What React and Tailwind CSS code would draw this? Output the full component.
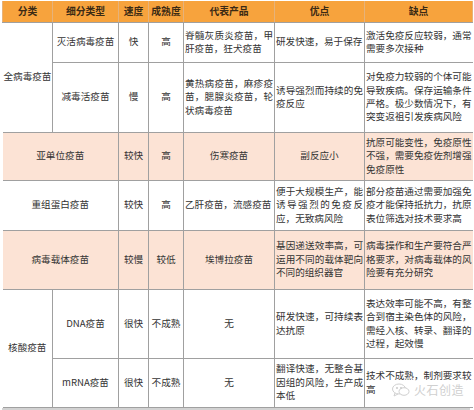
const cell = "border border-[#a0a0a0] align-middle px-[1px] text-[9.6px] leading-[13.4px] text-[#333] whitespace-nowrap";

const Lines = ({ lines }) => (
    <div className="flex flex-col">
        {lines.map((l, i) => (
            <div key={i} className={i < lines.length - 1 ? "whitespace-nowrap text-justify [text-align-last:justify]" : "whitespace-nowrap text-left"}>
                {l}
            </div>
        ))}
    </div>
);

const rows = [
    {
        h: "h-[40px]", pink: false, group: "全病毒疫苗", span: 2, sub: "灭活病毒疫苗", speed: "快", mature: "高",
        product: ["脊髓灰质炎疫苗，甲", "肝疫苗，狂犬疫苗"],
        pro: ["研发快速，易于保存"],
        con: ["激活免疫反应较弱，通常", "需要多次接种"],
    },
    {
        h: "h-[70px]", pink: false, sub: "减毒活疫苗", speed: "慢", mature: "高",
        product: ["黄热病疫苗，麻疹疫", "苗，腮腺炎疫苗，轮", "状病毒疫苗"],
        pro: ["诱导强烈而持续的免", "疫反应"],
        con: ["对免疫力较弱的个体可能", "导致疾病。保存运输条件", "严格。极少数情况下，有", "突变返祖引发疾病风险"],
    },
    {
        h: "h-[48px]", pink: true, wide: "亚单位疫苗", speed: "较快", mature: "高",
        product: "伤寒疫苗", pro: "副反应小",
        con: ["抗原可能变性，免疫原性", "不强，需要免疫佐剂增强", "免疫原性"],
    },
    {
        h: "h-[50px]", pink: false, wide: "重组蛋白疫苗", speed: "较快", mature: "高",
        product: ["乙肝疫苗，流感疫苗"],
        pro: ["便于大规模生产，能", "诱导强烈的免疫反", "应，无致病风险"],
        con: ["部分疫苗通过需要加强免", "疫才能保持抵抗力，抗原", "表位筛选对技术要求高"],
    },
    {
        h: "h-[59px]", pink: true, wide: "病毒载体疫苗", speed: "较慢", mature: "较低",
        product: "埃博拉疫苗",
        pro: ["基因递送效率高，可", "运用不同的载体靶向", "不同的组织器官"],
        con: ["病毒操作和生产要符合严", "格要求，对病毒载体的风", "险要有充分研究"],
    },
    {
        h: "h-[69px]", pink: false, group: "核酸疫苗", span: 2, sub: "DNA疫苗", speed: "很快", mature: "不成熟",
        product: "无",
        pro: ["研发快速，可持续表", "达抗原"],
        con: ["表达效率可能不高，有整", "合到宿主染色体的风险，", "需经入核、转录、翻译的", "过程，起效慢"],
    },
    {
        h: "h-[49px]", pink: false, sub: "mRNA疫苗", speed: "很快", mature: "不成熟",
        product: "无",
        pro: ["翻译快速，无整合基", "因组的风险，生产成", "本低"],
        con: ["技术不成熟，制剂要求较", "高"],
    },
];

const Content = ({ v }) => Array.isArray(v) ? <Lines lines={v} /> : <div className="text-center">{v}</div>;

export default function App() {
    return (
        <div className="relative w-[474px] h-[410px] bg-white overflow-hidden" style={{ fontFamily: '"Noto Sans CJK SC", "Noto Sans", sans-serif' }}>
            <table className="ml-[2px] mt-[1px] w-[470px] table-fixed border-collapse">
                <colgroup>
                    <col className="w-[50px]" />
                    <col className="w-[66px]" />
                    <col className="w-[30px]" />
                    <col className="w-[35px]" />
                    <col className="w-[91px]" />
                    <col className="w-[90px]" />
                    <col className="w-[108px]" />
                </colgroup>
                <thead>
                    <tr className="h-[21px] bg-[#f7a33d]">
                        {["分类", "细分类型", "速度", "成熟度", "代表产品", "优点", "缺点"].map((t, i) => (
                            <th key={i} className="border-x border-[#e6b27a] border-t-0 border-b border-b-[#a0a0a0] text-center text-[9.8px] font-bold text-[#3b2a14] whitespace-nowrap">{t}</th>
                        ))}
                    </tr>
                </thead>
                <tbody>
                    {rows.map((r, i) => (
                        <tr key={i} className={`${r.h} ${r.pink ? "bg-[#fce3d5]" : "bg-white"}`}>
                            {r.group && <td rowSpan={r.span} className={`${cell} text-center border-l-0`}>{r.group}</td>}
                            {r.wide ? (
                                <td colSpan={2} className={`${cell} text-center border-l-0`}>{r.wide}</td>
                            ) : (
                                <td className={`${cell} text-center`}>{r.sub}</td>
                            )}
                            <td className={`${cell} text-center`}>{r.speed}</td>
                            <td className={`${cell} text-center`}>{r.mature}</td>
                            <td className={cell}><Content v={r.product} /></td>
                            <td className={cell}><Content v={r.pro} /></td>
                            <td className={`${cell} border-r-0`}><Content v={r.con} /></td>
                        </tr>
                    ))}
                </tbody>
            </table>
            <div className="ml-[2px] w-[468px] h-[3px] bg-[#d2d2d2]" />
            <div className="absolute left-[391px] top-[382px] flex items-center gap-[3px] text-[#d0d0d0]">
                <svg width="20" height="16" viewBox="0 0 20 16" fill="none" stroke="#d0d0d0" strokeWidth="1">
                    <ellipse cx="8" cy="7" rx="6.5" ry="5" />
                    <path d="M4 11 L3 14 L7 12" />
                    <ellipse cx="13" cy="9.5" rx="5" ry="3.8" fill="white" />
                    <circle cx="6" cy="6" r="0.7" fill="#d0d0d0" />
                    <circle cx="10" cy="6" r="0.7" fill="#d0d0d0" />
                </svg>
                <span className="text-[12px] leading-none tracking-[0.5px]">火石创造</span>
            </div>
        </div>
    );
}
